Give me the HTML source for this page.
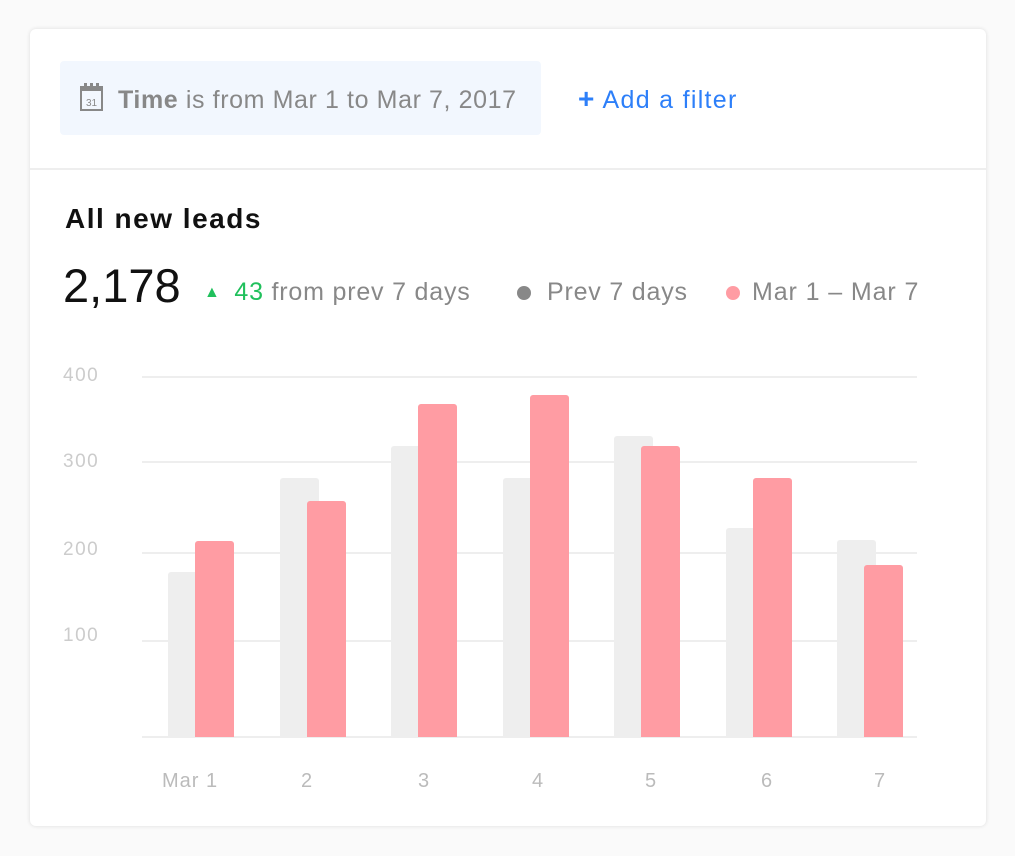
<!DOCTYPE html>
<html><head><style>
body{margin:0;width:1015px;height:856px;background:#fafafa;font-family:"Liberation Sans",sans-serif;position:relative;overflow:hidden}
.card{position:absolute;left:30px;top:29px;width:956px;height:797px;background:#fff;border-radius:6px;box-shadow:0 0 4px rgba(0,0,0,.12)}
.filter{position:absolute;left:60px;top:61px;width:481px;height:74px;background:#f2f7fe;border-radius:4px}
.t{position:absolute;white-space:nowrap}
.grid{position:absolute;left:142px;width:775px;height:2px;background:#eee}
.b{position:absolute;width:39px;border-radius:3px 3px 0 0}
.g{background:#eeeeee}.r{background:#ff9ca3}
.yl{position:absolute;left:63px;color:#ccc;font-size:19px;letter-spacing:1.5px}
.xl{position:absolute;top:770px;color:#bbb;font-size:20px;letter-spacing:1px;transform:translateX(-50%)}
</style></head><body>
<div class="card"></div>
<div class="filter"></div>
<svg style="position:absolute;left:80px;top:83px" width="24" height="29" viewBox="0 0 24 29"><rect x="1" y="4" width="21" height="23" fill="none" stroke="#888" stroke-width="2"/><rect x="1" y="4" width="21" height="4" fill="#888"/><rect x="4" y="0" width="3" height="5" fill="#888"/><rect x="10" y="0" width="3" height="5" fill="#888"/><rect x="16" y="0" width="3" height="5" fill="#888"/><text x="11.5" y="23" font-size="10" fill="#888" text-anchor="middle" font-family="Liberation Sans">31</text></svg>
<div class="t" style="left:118px;top:86px;font-size:25px;letter-spacing:0.6px;color:#888"><b>Time</b> is from Mar 1 to Mar 7, 2017</div>
<div class="t" style="left:578px;top:86px;font-size:25px;letter-spacing:1.3px;color:#2d7ff9"><b style="font-size:28px;line-height:24px">+</b> Add a filter</div>
<div style="position:absolute;left:30px;top:168px;width:956px;height:2px;background:#eee"></div>
<div class="t" style="left:65px;top:203px;font-size:28px;letter-spacing:1.5px;font-weight:bold;color:#111">All new leads</div>
<div class="t" style="left:63px;top:258px;font-size:47px;color:#111">2,178</div>
<div class="t" style="left:204px;top:278px;font-size:25px;letter-spacing:0.8px;color:#888"><span style="color:#20c05c;font-size:16px;position:relative;top:-3px;margin-right:6px">▲</span> <span style="color:#20c05c">43</span> from prev 7 days</div>
<div class="t" style="left:517px;top:278px;font-size:25px;letter-spacing:0.8px;color:#888"><span style="display:inline-block;width:14px;height:14px;border-radius:50%;background:#888;margin-right:16px"></span>Prev 7 days</div>
<div class="t" style="left:726px;top:278px;font-size:25px;letter-spacing:0.9px;color:#888"><span style="display:inline-block;width:14px;height:14px;border-radius:50%;background:#ff9ca3;margin-right:12px"></span>Mar 1 – Mar 7</div>
<div class="grid" style="top:376px"></div>
<div class="grid" style="top:461px"></div>
<div class="grid" style="top:552px"></div>
<div class="grid" style="top:640px"></div>
<div class="grid" style="top:736px"></div>
<div class="yl" style="top:365px">400</div>
<div class="yl" style="top:451px">300</div>
<div class="yl" style="top:539px">200</div>
<div class="yl" style="top:625px">100</div>
<div class="b g" style="left:168px;top:572px;height:165px"></div><div class="b r" style="left:195px;top:541px;height:196px"></div>
<div class="b g" style="left:280px;top:478px;height:259px"></div><div class="b r" style="left:307px;top:501px;height:236px"></div>
<div class="b g" style="left:391px;top:446px;height:291px"></div><div class="b r" style="left:418px;top:404px;height:333px"></div>
<div class="b g" style="left:503px;top:478px;height:259px"></div><div class="b r" style="left:530px;top:395px;height:342px"></div>
<div class="b g" style="left:614px;top:436px;height:301px"></div><div class="b r" style="left:641px;top:446px;height:291px"></div>
<div class="b g" style="left:726px;top:528px;height:209px"></div><div class="b r" style="left:753px;top:478px;height:259px"></div>
<div class="b g" style="left:837px;top:540px;height:197px"></div><div class="b r" style="left:864px;top:565px;height:172px"></div>
<div class="xl" style="left:190px">Mar 1</div>
<div class="xl" style="left:307px">2</div>
<div class="xl" style="left:424px">3</div>
<div class="xl" style="left:538px">4</div>
<div class="xl" style="left:651px">5</div>
<div class="xl" style="left:767px">6</div>
<div class="xl" style="left:880px">7</div>
</body></html>
